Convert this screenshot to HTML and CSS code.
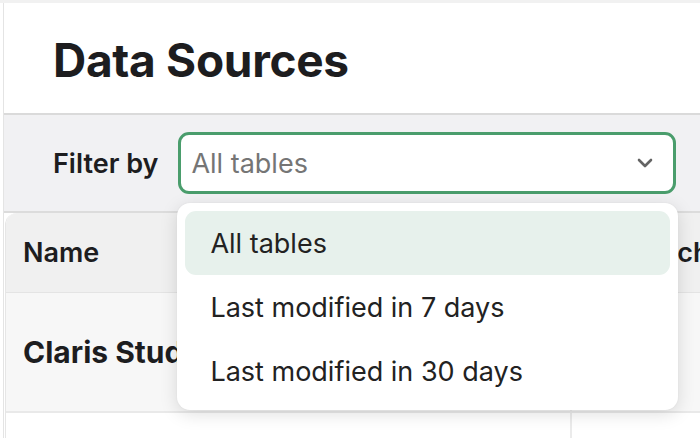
FILE: index.html
```html
<!DOCTYPE html>
<html lang="en">
<head>
<meta charset="utf-8">
<title>Data Sources</title>
<link rel="stylesheet" href="styles.css">
</head>
<body>
<div class="page">
  <header class="page-header">
    <h1 class="title">Data Sources</h1>
  </header>
  <div class="filter-bar">
    <span class="filter-label">Filter by</span>
    <div class="select-wrap">
      <div class="select">
        <span class="select-value">All tables</span>
        <svg class="chevron" width="16" height="10" viewBox="0 0 16 10" aria-hidden="true">
          <path d="M2 2 L8 8 L14 2" fill="none" stroke="#646464" stroke-width="2.6" stroke-linecap="round" stroke-linejoin="round"/>
        </svg>
      </div>
      <ul class="menu">
        <li class="menu-item active">All tables</li>
        <li class="menu-item">Last modified in 7 days</li>
        <li class="menu-item">Last modified in 30 days</li>
      </ul>
    </div>
  </div>
  <div class="table">
    <div class="row head">
      <div class="cell name">Name</div>
      <div class="cell other">Last Fetched</div>
    </div>
    <div class="row body-row">
      <div class="cell name strong">Claris Studio Tables</div>
      <div class="cell other"></div>
    </div>
    <div class="row body-row blank">
      <div class="cell name"></div>
      <div class="cell other"></div>
    </div>
  </div>
</div>
</body>
</html>
```

FILE: styles.css
```css
* { box-sizing: border-box; }
html, body { margin: 0; padding: 0; }
body {
  background: #ffffff;
  font-family: Inter, "Noto Sans", "Liberation Sans", sans-serif;
  color: #1d1d1f;
  border-top: 3px solid #f1f1f1;
  height: 438px;
  overflow: hidden;
}
.page {
  margin-left: 3px;
  border-left: 1.5px solid #e4e4e4;
  height: 435px;
  overflow: hidden;
}
.page-header {
  height: 112px;
  display: flex;
  align-items: center;
  padding-left: 49px;
  padding-top: 4px;
  border-bottom: 2px solid #dadada;
}
.title {
  margin: 0;
  font-size: 46px;
  font-weight: 700;
  letter-spacing: -0.3px;
  color: #1d1d1f;
}
.filter-bar {
  height: 98px;
  background: #f1f1f3;
  border-bottom: 2px solid #dcdcdc;
  display: flex;
  align-items: center;
  padding-left: 49px;
  gap: 20px;
}
.filter-label {
  font-size: 27px;
  font-weight: 600;
  color: #1d1d1f;
}
.select-wrap {
  position: relative;
}
.select {
  width: 498px;
  height: 62px;
  border: 3px solid #4a9d6c;
  border-radius: 11px;
  background: #ffffff;
  display: flex;
  align-items: center;
  justify-content: space-between;
  padding: 0 20px 0 10px;
}
.select-value {
  font-size: 27px;
  color: #757575;
}
.chevron { display: block; }
.menu {
  position: absolute;
  top: 71px;
  left: -1px;
  width: 501px;
  margin: 0;
  padding: 8px 8px 7px;
  list-style: none;
  background: #ffffff;
  border-radius: 13px;
  box-shadow: 0 4px 18px rgba(0, 0, 0, 0.13), 0 0 2px rgba(0, 0, 0, 0.06);
  z-index: 5;
}
.menu-item {
  height: 64px;
  display: flex;
  align-items: center;
  padding-left: 25px;
  font-size: 27px;
  color: #222;
  border-radius: 11px;
}
.menu-item.active { background: #e7f1ec; }
.table {
  margin-left: 1px;
  border-top-left-radius: 12px;
  border-left: 1px solid #e6e6e6;
  overflow: hidden;
}
.row {
  display: grid;
  grid-template-columns: 564px 1fr;
}
.row.head {
  height: 80px;
  background: #f0f0f0;
  border-bottom: 1px solid #e4e4e4;
}
.row.body-row {
  height: 120px;
  background: #f7f7f7;
  border-bottom: 2px solid #e9e9e9;
}
.row.blank { background: #ffffff; }
.cell {
  display: flex;
  align-items: center;
  padding-left: 17px;
  font-size: 27px;
  font-weight: 600;
  white-space: nowrap;
  overflow: hidden;
}
.cell.other {
  border-left: 2px solid #ebebeb;
  padding-left: 18px;
}
.row.head .cell.other { border-left: none; padding-left: 5px; }
.cell.strong { font-size: 30px; font-weight: 700; }
```
